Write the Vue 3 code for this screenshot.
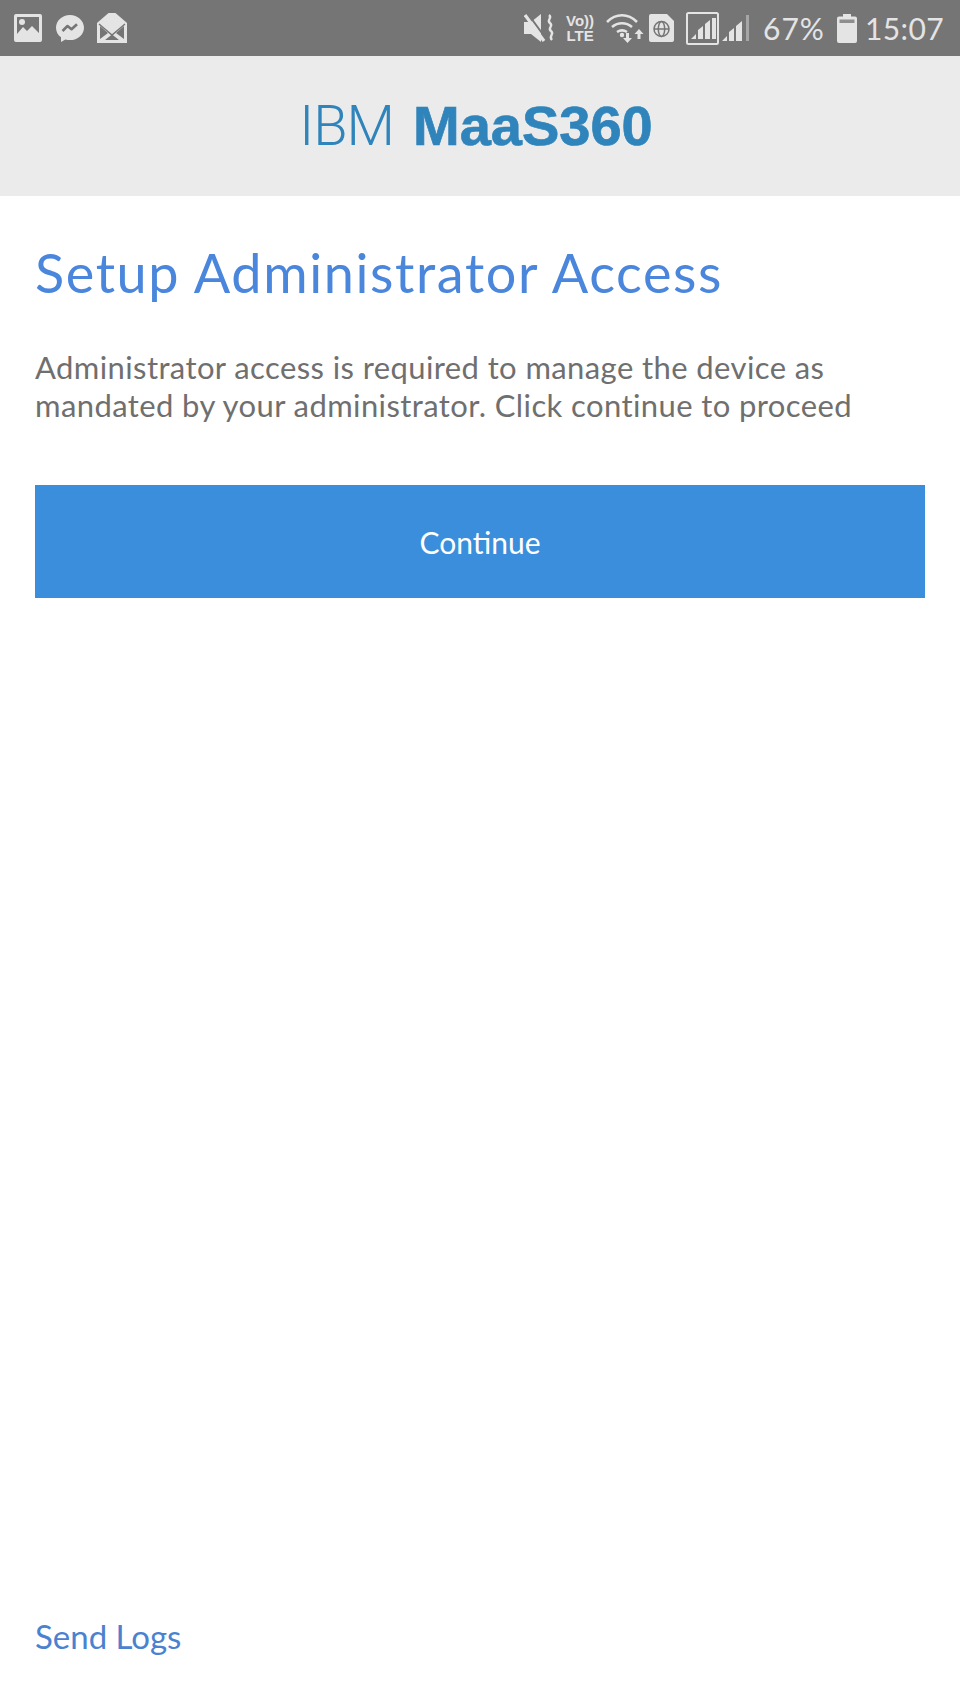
<template>
  <div class="screen">
    <!-- status bar -->
    <div class="status-bar">
      <div class="status-left">
        <svg class="ic-image" viewBox="0 0 28 28">
          <path fill-rule="evenodd" fill="#e4e4e4" d="M2 0h24a2 2 0 0 1 2 2v24a2 2 0 0 1-2 2H2a2 2 0 0 1-2-2V2a2 2 0 0 1 2-2zM3 3v17l6-7 4 4 5-5 7 7V3z" />
          <circle cx="8" cy="8" r="3" fill="#e4e4e4" />
        </svg>
        <svg class="ic-messenger" viewBox="0 0 28 28">
          <path fill="#e4e4e4" d="M14 1C6.300 1 0 6.700 0 13.700c0 3.900 1.900 7.300 5 9.600V28l4.400-2.600c1.500.4 3 .7 4.600.7 7.700 0 14-5.600 14-12.400S21.700 1 14 1z" />
          <path fill="none" stroke="#757575" stroke-width="2.600" stroke-linejoin="round" d="M6.500 17l5-5 4 3.200 5.500-5" />
        </svg>
        <svg class="ic-mail" viewBox="0 0 30 30">
          <path fill="#e4e4e4" d="M11.500 0h7L30 10v20H0V10z" />
          <path fill="#757575" d="M3 13l8 7-8 6zM27 13l-8 7 8 6zM8 27l7-5.500 7 5.500z" />
          <path fill="none" stroke="#757575" stroke-width="1.400" d="M2 11l13 11 13-11" />
        </svg>
      </div>
      <div class="status-right">
        <svg class="ic-mute" viewBox="0 0 32 28">
          <path fill="#e4e4e4" d="M0 8h7l10-8v28L7 20H0z" />
          <path stroke="#757575" stroke-width="2" d="M4 0l19 26" />
          <path stroke="#e4e4e4" stroke-width="3.200" d="M1 1l19 26" />
          <path fill="none" stroke="#e4e4e4" stroke-width="2.400" d="M25 1c4 3-3 5 1 8s-3 5 1 8-3 5 1 9" />
        </svg>
        <div class="volte">
          <span>Vo))</span>
          <span>LTE</span>
        </div>
        <svg class="ic-wifi" viewBox="0 0 38 30">
          <g fill="none" stroke="#e4e4e4" stroke-width="2.600">
            <path d="M1 9c9-9 21-9 30 0" />
            <path d="M6 14c6-5 14-5 20 0" />
            <path d="M11 19c3-2 7-2 10 0" />
          </g>
          <circle cx="16" cy="22" r="2.200" fill="#e4e4e4" />
          <path fill="#e4e4e4" d="M20 20h3v5h3l-4.500 5-4.500-5h3zM33 16l4.500 5h-3v5h-3v-5h-3z" />
        </svg>
        <svg class="ic-sim" viewBox="0 0 25 28">
          <path fill="#e4e4e4" d="M2 0h16l7 7v19a2 2 0 0 1-2 2H2a2 2 0 0 1-2-2V2a2 2 0 0 1 2-2z" />
          <g fill="none" stroke="#757575" stroke-width="1.500">
            <circle cx="12.500" cy="15" r="7.500" />
            <ellipse cx="12.500" cy="15" rx="3.200" ry="7.500" />
            <path d="M5 15h15" />
          </g>
        </svg>
        <svg class="ic-signal-box" viewBox="0 0 33 33">
          <rect x="1" y="1" width="31" height="31" rx="1.500" fill="none" stroke="#e4e4e4" stroke-width="2" />
          <path fill="#e4e4e4" d="M5 27l5-5v5zM12 27v-9l5-4v13zM19 27V12l5-4v19z" />
          <path fill="#e4e4e4" d="M26 27V6h4v21z" />
        </svg>
        <svg class="ic-signal" viewBox="0 0 28 28">
          <path fill="#e4e4e4" d="M0 27l5-5v5zM7 27v-9l5-4v13zM14 27V12l6-5v20z" />
          <path fill="#a6a6a6" d="M24 27V1h3v26z" />
        </svg>
        <span class="battery-pct">67%</span>
        <svg class="ic-battery" viewBox="0 0 20 29">
          <path fill="#e4e4e4" d="M6 0h8v2.500h4a2 2 0 0 1 2 2V27a2 2 0 0 1-2 2H2a2 2 0 0 1-2-2V4.500a2 2 0 0 1 2-2h4z" />
          <rect x="2.500" y="5.500" width="15" height="3.500" fill="#8e8e8e" />
        </svg>
        <span class="clock">15:07</span>
      </div>
    </div>

    <!-- logo header -->
    <header class="brand-bar">
      <div class="brand">
        <span class="brand-ibm">IBM</span>
        <span class="brand-name">MaaS360</span>
      </div>
    </header>

    <main class="content">
      <h1 class="title">Setup Administrator Access</h1>
      <p class="desc">
        Administrator access is required to manage the device as<br />
        mandated by your administrator. Click continue to proceed
      </p>
      <button class="continue-btn">Continue</button>
      <a class="send-logs">Send Logs</a>
    </main>
  </div>
</template>

<script setup>
</script>

<style>
html,
body {
  margin: 0;
  background: #fff;
}
</style>

<style scoped>
.screen {
  width: 960px;
  height: 1706px;
  display: flex;
  flex-direction: column;
  background: #fff;
  font-family: "Lato", "Open Sans", sans-serif;
  overflow: hidden;
}

/* status bar */
.status-bar {
  height: 56px;
  flex: none;
  display: flex;
  align-items: center;
  justify-content: space-between;
  padding: 0 16px 0 14px;
  background: #757575;
  color: #e4e4e4;
}
.status-left,
.status-right {
  display: flex;
  align-items: center;
}
.status-left svg,
.status-right svg {
  display: block;
  flex: none;
}
.ic-image { width: 28px; height: 28px; }
.ic-messenger { width: 28px; height: 28px; margin-left: 14px; }
.ic-mail { width: 30px; height: 30px; margin-left: 13px; }
.ic-mute { width: 32px; height: 28px; }
.volte {
  width: 30px;
  margin-left: 9px;
  font-family: "Liberation Sans", sans-serif;
  font-size: 15px;
  line-height: 15px;
  font-weight: 700;
  text-align: center;
  display: flex;
  flex-direction: column;
}
.ic-wifi { width: 38px; height: 30px; margin-left: 11px; }
.ic-sim { width: 25px; height: 28px; margin-left: 5px; }
.ic-signal-box { width: 33px; height: 33px; margin-left: 12px; }
.ic-signal { width: 28px; height: 28px; margin-left: 3px; }
.battery-pct {
  margin-left: 13px;
  font-size: 30px;
  line-height: 36px;
  letter-spacing: 1px;
}
.ic-battery { width: 20px; height: 29px; margin-left: 12px; }
.clock {
  margin-left: 8px;
  font-size: 30px;
  line-height: 36px;
  letter-spacing: 0.4px;
}

/* logo */
.brand-bar {
  height: 140px;
  flex: none;
  display: flex;
  align-items: center;
  justify-content: center;
  padding-right: 8px;
  background: #ebebeb;
}
.brand {
  display: flex;
  align-items: baseline;
  gap: 19px;
  font-family: "Liberation Sans", sans-serif;
  font-size: 56px;
  line-height: 64px;
  color: #2f84bb;
}
.brand-ibm {
  font-family: "Roboto", "Liberation Sans", sans-serif;
  font-weight: 300;
  letter-spacing: -1px;
}
.brand-name {
  font-weight: 700;
  letter-spacing: 0;
  -webkit-text-stroke: 0.7px #2f84bb;
}

/* body */
.content {
  flex: 1;
  display: flex;
  flex-direction: column;
  padding: 45px 35px 50px;
}
.title {
  margin: 0;
  font-size: 54px;
  line-height: 64px;
  font-weight: 400;
  letter-spacing: 1.6px;
  color: #4a86dc;
}
.desc {
  margin: 43px 0 0;
  font-size: 31px;
  line-height: 38px;
  letter-spacing: 0.4px;
  color: #6f6f6f;
}
.continue-btn {
  width: 890px;
  height: 113px;
  flex: none;
  margin-top: 61px;
  padding: 0;
  border: 0;
  background: #3a8edc;
  color: #fff;
  font-family: inherit;
  font-size: 30px;
}
.send-logs {
  margin-top: auto;
  font-size: 33px;
  line-height: 40px;
  color: #4a82cf;
}
</style>
